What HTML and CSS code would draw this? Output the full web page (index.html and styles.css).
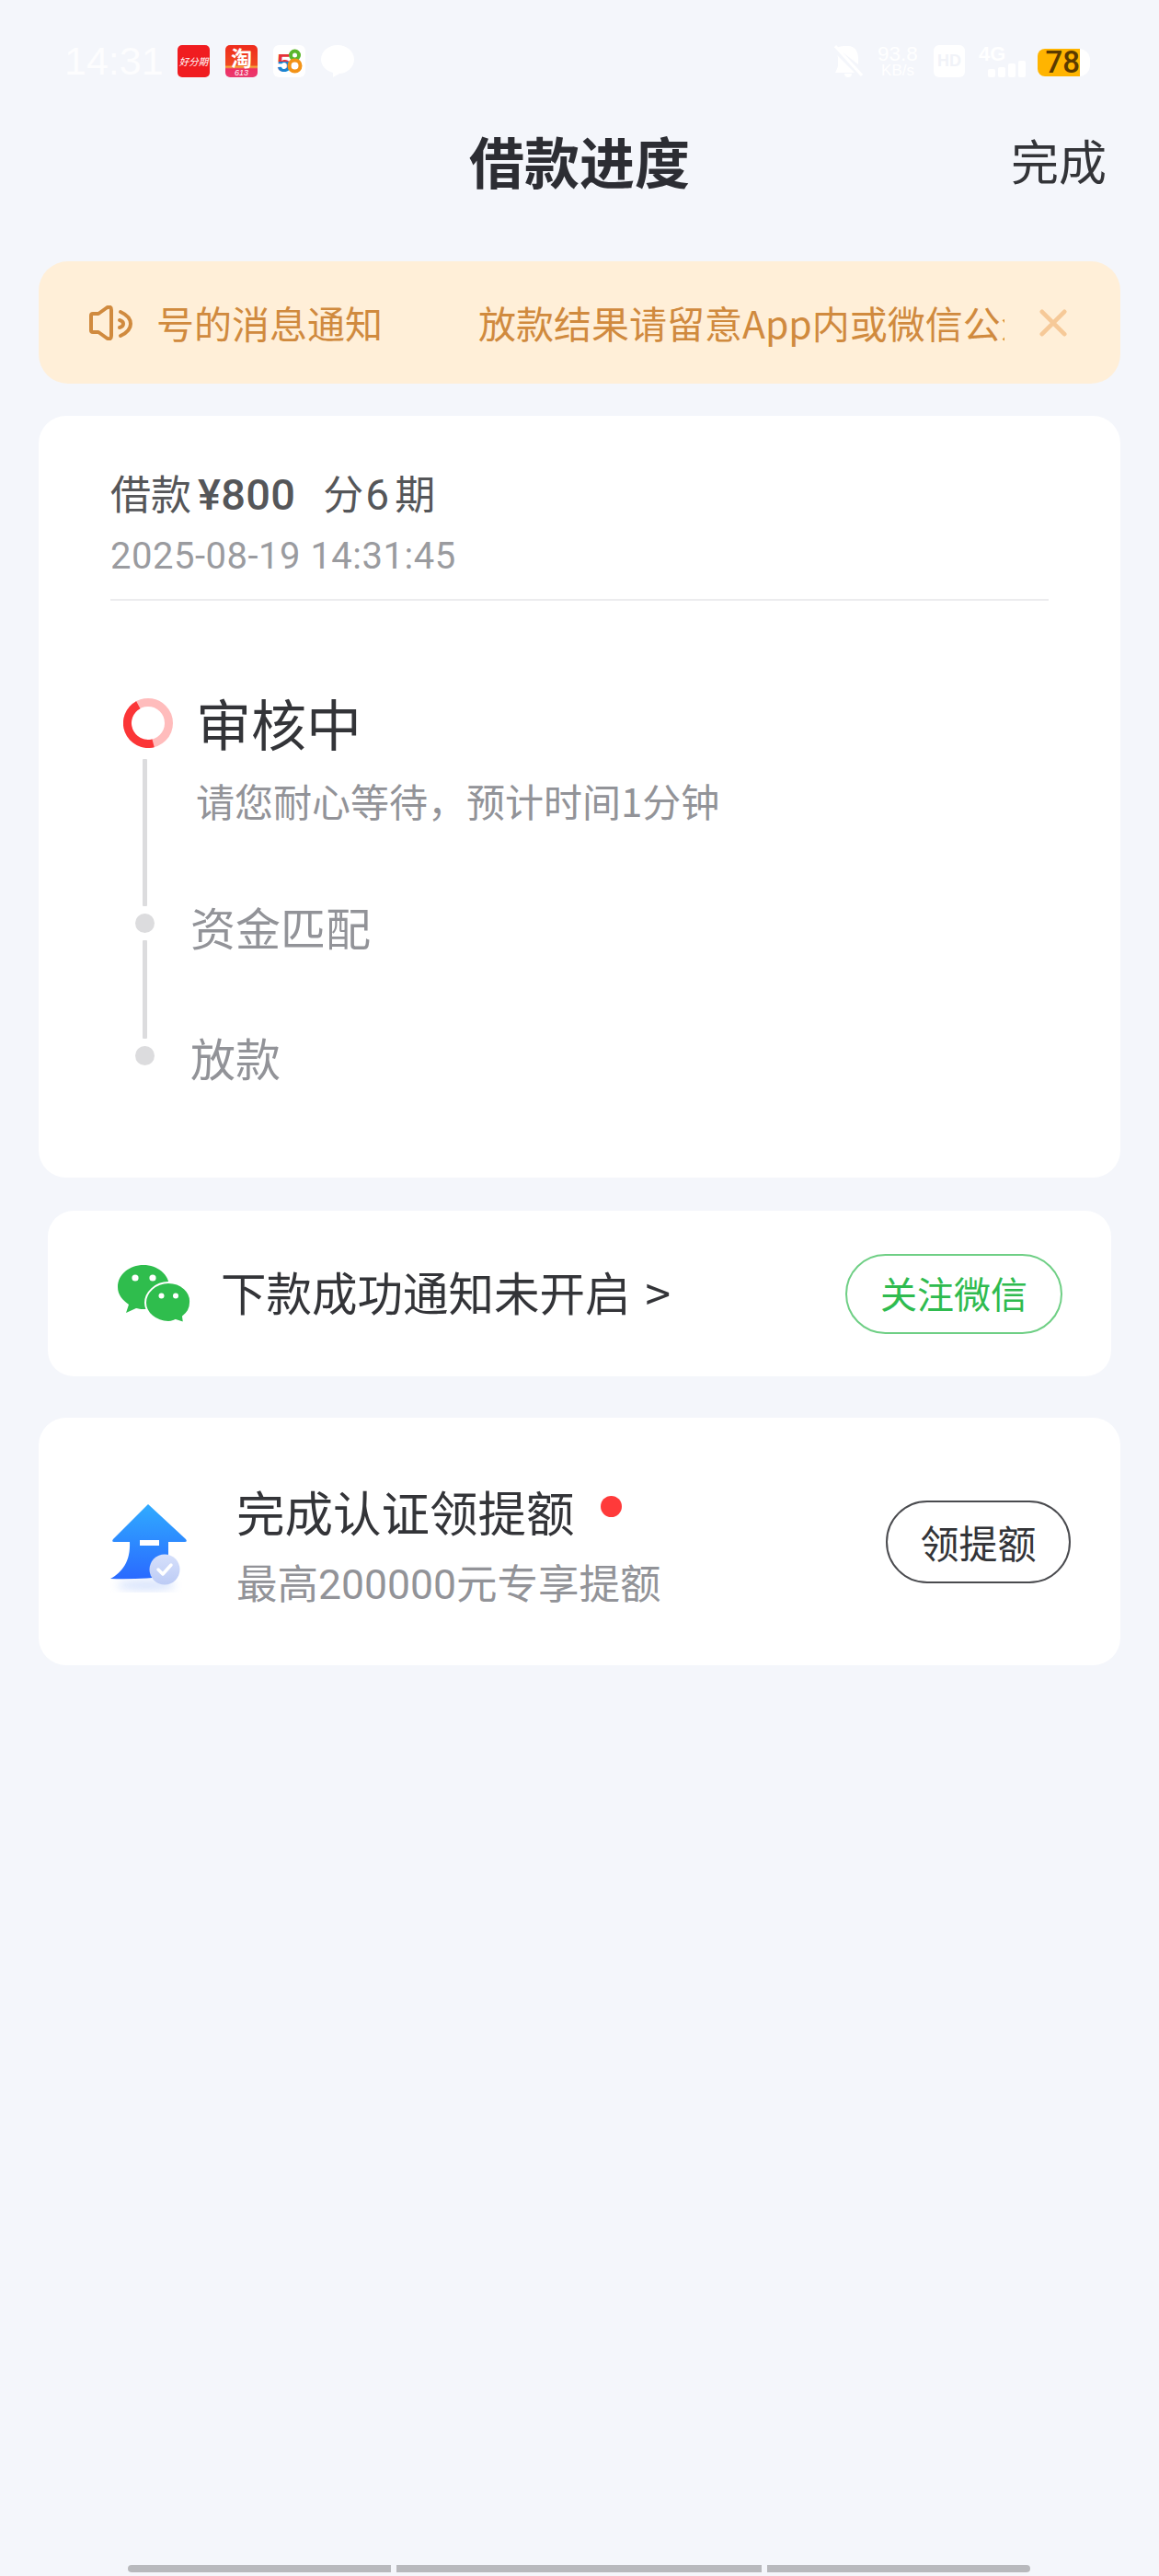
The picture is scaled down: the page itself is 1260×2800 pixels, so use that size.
FILE: index.html
```html
<!DOCTYPE html>
<html lang="zh-CN">
<head>
<meta charset="utf-8">
<title>借款进度</title>
<link rel="stylesheet" href="styles.css">
</head>
<body>
<div class="page">
  <div class="statusbar">
    <div class="status-left">
      <span class="time">14:31</span>
      <span class="app app-hfq">好分期</span>
      <span class="app app-tb"><span class="tb-main">淘</span><span class="tb-sub">613</span></span>
      <svg class="app app-58" viewBox="0 0 35 35">
        <defs><linearGradient id="five" x1="0" y1="0" x2="0" y2="1"><stop offset="0.45" stop-color="#e5333a"/><stop offset="0.46" stop-color="#1c83d0"/></linearGradient></defs>
        <rect width="35" height="35" rx="6" fill="#fff"/>
        <text x="4" y="29" class="five" fill="url(#five)">5</text>
        <circle cx="23.500" cy="11" r="4.500" fill="none" stroke="#5bb62c" stroke-width="4"/>
        <circle cx="23.500" cy="22.500" r="6" fill="none" stroke="#f39317" stroke-width="4"/>
      </svg>
      <svg class="chat" viewBox="0 0 36 36"><path d="M18 0C28 0 36 7 36 15.500S28 31 20 31L13 35 13 30C5 28 0 22 0 15.500 0 7 8 0 18 0Z" fill="#fff"/></svg>
    </div>
    <div class="status-right">
      <svg class="bell" viewBox="0 0 31 35"><path d="M15 1C23 1 26 8 26 14V21L3 3C6 1 10 1 15 1ZM1 9 22 30H1C2 27 4 25 4 22V14C4 12 3 11 1 9ZM11 31H19C19 34 17 35 15 35 13 35 11 34 11 31Z" fill="#fff"/><path d="M1 1 30 33" stroke="#fff" stroke-width="3"/></svg>
      <span class="speed"><span class="speed-num">93.8</span><span class="speed-unit">KB/s</span></span>
      <span class="hd">HD</span>
      <span class="net">
        <span class="net-label">4G</span>
        <span class="bars"><i class="bar b1"></i><i class="bar b2"></i><i class="bar b3"></i><i class="bar b4"></i></span>
      </span>
      <span class="battery"><span class="battery-fill">78</span></span>
    </div>
  </div>

  <header class="nav">
    <span></span>
    <h1 class="nav-title">借款进度</h1>
    <span class="nav-action">完成</span>
  </header>

  <main class="content">
    <div class="notice">
      <svg class="speaker" viewBox="0 0 47 38" fill="none" stroke="#d08a3e" stroke-width="4" stroke-linecap="round" stroke-linejoin="round">
        <path d="M4 9H10L19 2.500Q24 0 24 5V33Q24 38 19 35.500L10 29H4Q2 29 2 27V11Q2 9 4 9Z"/>
        <path d="M34 7Q45 12 45 20T34 33"/>
        <path d="M33 16Q37 17 37 20T33 24"/>
      </svg>
      <div class="notice-clip">
        <span>号的消息通知</span>
        <span>放款结果请留意App内或微信公众号的消息通知</span>
      </div>
      <svg class="close" viewBox="0 0 32 32"><path d="M3 3 29 29M29 3 3 29" stroke="#f6c998" stroke-width="5" stroke-linecap="round"/></svg>
    </div>

    <section class="card progress">
      <div class="loan"><span class="loan-word">借款</span><span class="loan-amt">¥800</span><span class="loan-word loan-fen">分</span><span class="loan-six">6</span><span class="loan-word">期</span></div>
      <div class="loan-date">2025-08-19 14:31:45</div>
      <div class="divider"></div>
      <div class="timeline">
        <div class="rail">
          <svg class="ring" viewBox="0 0 54 54" fill="none" stroke-width="9">
            <circle cx="27" cy="27" r="22.500" stroke="#ffbcbc"/>
            <path d="M16.300 7.200A22.500 22.500 0 0 0 32.600 48.800" stroke="#fb3537"/>
          </svg>
          <i class="line line-a"></i>
          <i class="dot"></i>
          <i class="line line-b"></i>
          <i class="dot"></i>
        </div>
        <div class="steps">
          <div class="step-active">审核中</div>
          <div class="step-desc">请您耐心等待，预计时间1分钟</div>
          <div class="step-next step-match">资金匹配</div>
          <div class="step-next step-pay">放款</div>
        </div>
      </div>
    </section>

    <section class="card wechat">
      <svg class="wechat-icon" viewBox="0 0 79 63">
        <path d="M28 0C43 0 56 10 56 24S43 48 28 48C25 48 22 47.500 20 47L9 52 12 43C5 38 0 32 0 24 0 10 13 0 28 0Z" fill="#2fbd4d"/>
        <circle cx="19" cy="14" r="3.600" fill="#fff"/><circle cx="38" cy="14" r="3.600" fill="#fff"/>
        <path d="M55 19C69 19 80 29 79 41 79 48 75 53 71 56L72 63 63 60C60 61 58 62 55 62 41 62 30 52 30 41S41 19 55 19Z" fill="#2fbd4d" stroke="#fff" stroke-width="2"/>
        <circle cx="47.500" cy="33.500" r="3" fill="#fff"/><circle cx="63" cy="33.500" r="3" fill="#fff"/>
      </svg>
      <span class="wechat-text">下款成功通知未开启<span class="wechat-arrow">&gt;</span></span>
      <span class="btn btn-green">关注微信</span>
    </section>

    <section class="card upgrade">
      <svg class="upgrade-icon" viewBox="0 0 95 110">
        <defs>
          <linearGradient id="arrow" x1="0" y1="0" x2="0" y2="1"><stop offset="0" stop-color="#30abff"/><stop offset="1" stop-color="#2a6aff"/></linearGradient>
          <linearGradient id="badge" x1="0" y1="0" x2="0" y2="1"><stop offset="0" stop-color="#d6e0fb"/><stop offset="1" stop-color="#bccbf5"/></linearGradient>
          <filter id="soft"><feGaussianBlur stdDeviation="5"/></filter>
        </defs>
        <ellipse cx="44" cy="92" rx="32" ry="6" fill="#c9d9fb" opacity="0.700" filter="url(#soft)"/>
        <path d="M46 4 87 42Q89 45 86 45H68V82Q40 86 5 85C18 78 27 66 26 45H9Q6 45 8 42Z" fill="url(#arrow)"/>
        <rect x="37" y="43" width="21" height="6" fill="#fff"/>
        <circle cx="64" cy="75" r="16.500" fill="url(#badge)"/>
        <path d="M57 75 62 80 71 70" fill="none" stroke="#fff" stroke-width="3.500" stroke-linecap="round" stroke-linejoin="round"/>
      </svg>
      <div class="upgrade-body">
        <div class="upgrade-head"><span class="upgrade-title">完成认证领提额</span><i class="red-dot"></i></div>
        <div class="upgrade-sub">最高200000元专享提额</div>
      </div>
      <span class="btn btn-dark">领提额</span>
    </section>
  </main>

  <div class="home-bar"><i class="seg seg-a"></i><i class="seg seg-b"></i><i class="seg seg-c"></i></div>
</div>
</body>
</html>
```
FILE: styles.css
```css
* { box-sizing: border-box; }
html, body { margin: 0; padding: 0; }
body {
  background: #f4f6fb;
  font-family: "Noto Sans CJK SC", "Noto Sans", sans-serif;
  color: #333438;
}
.page { width: 1260px; height: 2800px; display: flex; flex-direction: column; }

/* status bar */
.statusbar { display: flex; justify-content: space-between; align-items: center; height: 35px; margin-top: 49px; padding: 0 75px 0 70px; color: #fff; }
.status-left, .status-right { display: flex; align-items: center; }
.time { font: 43px/35px "Liberation Sans", sans-serif; width: 105px; margin-right: 18px; color: #fdfdfe; white-space: nowrap; }
.app { display: flex; width: 35px; height: 35px; border-radius: 5px; margin-right: 17px; }
.app-hfq { background: #f01c20; color: #fff; font-size: 10.500px; line-height: 35px; justify-content: center; font-style: italic; white-space: nowrap; }
.app-tb { flex-direction: column; align-items: center; background: linear-gradient(#ef2a1c 0, #f04a20 62%, #f5b23a 68%, #ee2f62 74%, #ea3a70 100%); color: #fff; }
.tb-main { font-size: 23px; line-height: 26px; font-weight: 700; }
.tb-sub { font: italic 9px/9px "Liberation Sans", sans-serif; }
.five { font: 700 28px "Liberation Sans", sans-serif; }
.chat { width: 36px; height: 36px; }
.bell { width: 31px; height: 35px; margin-right: 16px; }
.speed { display: flex; flex-direction: column; align-items: center; width: 44px; margin-right: 17px; font-family: "Liberation Sans", sans-serif; }
.speed-num { font-size: 22.500px; line-height: 20px; }
.speed-unit { font-size: 17px; line-height: 15px; }
.hd { width: 34px; height: 35px; border-radius: 6px; background: #fff; color: #f1f3f8; font: 700 18px/35px "Liberation Sans", sans-serif; text-align: center; margin-right: 15px; }
.net { position: relative; display: block; width: 51px; height: 35px; margin-right: 13px; }
.net-label { display: block; font: 700 22px/20px "Liberation Sans", sans-serif; }
.bars { position: absolute; right: 0; bottom: 0; display: flex; align-items: flex-end; gap: 3px; }
.bar { display: block; width: 8px; background: #fff; border-radius: 2px; }
.b1 { height: 9px; } .b2 { height: 11px; } .b3 { height: 15px; } .b4 { height: 18px; }
.battery { display: block; width: 57px; height: 30px; border-radius: 8px 12px 12px 8px; background: #fff; margin-top: 2px; }
.battery-fill { display: block; width: 46px; height: 30px; border-radius: 8px 0 0 8px; background: #ffb400; color: #5a3a00; font: 500 33px/30px Roboto, sans-serif; text-align: right; }

/* nav */
.nav { display: grid; grid-template-columns: 1fr auto 1fr; align-items: center; height: 80px; margin-top: 50px; padding: 0 57px; }
.nav-title { margin: 0; font-size: 60px; line-height: 80px; font-weight: 700; color: #2c2d33; }
.nav-action { justify-self: end; font-size: 52px; line-height: 80px; color: #333438; }

.content { padding: 0 42px; margin-top: 70px; display: flex; flex-direction: column; }

/* notice */
.notice { display: flex; align-items: center; height: 133px; background: #ffefd8; border-radius: 32px; padding: 0 58px 0 55px; }
.speaker { width: 47px; height: 38px; flex: none; margin-right: 26px; }
.notice-clip { display: flex; gap: 104px; flex: none; width: 922px; height: 60px; margin-top: -2px; overflow: hidden; white-space: nowrap; font-size: 41px; line-height: 60px; color: #d08a3e; }
.notice-clip span { flex: none; }
.close { width: 30px; height: 30px; margin-left: auto; }

.card { background: #fff; border-radius: 30px; }

/* progress */
.progress { margin-top: 35px; padding: 61px 78px 96px; height: 828px; }
.loan { display: flex; align-items: baseline; height: 50px; font-size: 44px; line-height: 50px; color: #555659; font-family: Roboto, "Noto Sans CJK SC", sans-serif; }
.loan-amt { margin-left: 7px; font-size: 47px; font-weight: 500; letter-spacing: 0.300px; }
.loan-fen { margin-left: 30px; }
.loan-six { margin: 0 6px 0 2px; font-size: 46px; }
.loan-date { margin-top: 17px; font: 40px/50px Roboto, sans-serif; letter-spacing: 0.500px; color: #9a9b9f; }
.divider { height: 2px; margin-top: 21px; background: #ececee; }
.timeline { display: flex; margin-top: 106px; }
.rail { flex: none; width: 60px; margin-left: 7.500px; display: flex; flex-direction: column; align-items: center; }
.ring { width: 54px; height: 54px; margin-left: 6px; flex: none; }
.line { display: block; width: 5px; background: #dcdcde; border-radius: 1px; flex: none; }
.line-a { height: 160px; margin-top: 12px; }
.line-b { height: 107px; margin-top: 8px; }
.dot { display: block; width: 21px; height: 21px; border-radius: 50%; background: #dcdcde; margin-top: 8px; flex: none; }
.steps { margin-left: 19.500px; display: flex; flex-direction: column; margin-top: -3px; }
.step-active { font-size: 60px; line-height: 58px; margin-left: 6px; color: #333438; }
.step-desc { font-size: 42px; line-height: 50px; margin-top: 31px; margin-left: 6px; color: #929398; }
.step-next { font-size: 49px; line-height: 60px; color: #929398; }
.step-match { margin-top: 82px; }
.step-pay { margin-top: 82px; }

/* wechat */
.wechat { display: flex; align-items: center; height: 180px; margin: 36px 10px 0; padding: 0 53px 0 76px; border-radius: 28px; }
.wechat-icon { width: 79px; height: 63px; flex: none; margin-right: 33px; }
.wechat-text { font-size: 49.500px; line-height: 60px; margin-top: -4px; color: #333438; white-space: nowrap; }
.wechat-arrow { margin-left: 16px; }
.btn { display: flex; align-items: center; justify-content: center; margin-left: auto; flex: none; border-radius: 50px; }
.btn-green { width: 236px; height: 87px; border: 2px solid #6fcf85; color: #2fbb4f; font-size: 40px; padding-bottom: 3px; }
.btn-dark { width: 201px; height: 90px; border: 2px solid #4a4b4f; color: #333438; font-size: 42px; }

/* upgrade */
.upgrade { display: flex; align-items: center; height: 269px; margin-top: 45px; padding: 0 54px 0 73px; }
.upgrade-icon { width: 95px; height: 110px; flex: none; margin-top: 20px; }
.upgrade-body { margin-left: 47px; margin-top: 13px; }
.upgrade-head { display: flex; }
.upgrade-title { font-size: 52.500px; line-height: 60px; color: #333438; }
.red-dot { display: block; width: 23px; height: 23px; border-radius: 50%; background: #ff3a3a; margin: 14px 0 0 28px; }
.upgrade-sub { margin-top: 21px; font-family: Roboto, "Noto Sans CJK SC", sans-serif; font-size: 44.500px; line-height: 60px; color: #929398; }

/* gesture bar */
.home-bar { display: flex; gap: 6px; margin: auto 0 4px 139px; height: 8px; }
.seg { display: block; height: 8px; background: #b8b9bd; }
.seg-a { width: 286px; border-radius: 4px 0 0 4px; }
.seg-b { width: 397px; }
.seg-c { width: 286px; border-radius: 0 4px 4px 0; }
```
